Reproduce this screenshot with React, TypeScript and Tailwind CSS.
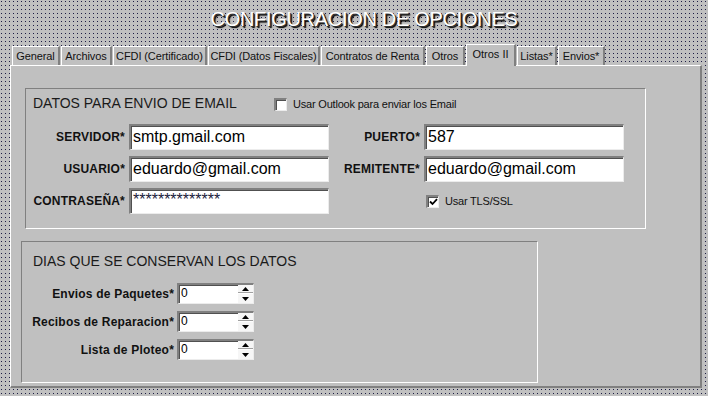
import React from 'react';

const TABS = [
  { label: 'General', w: 'w-[48px]' },
  { label: 'Archivos', w: 'w-[51px]' },
  { label: 'CFDI (Certificado)', w: 'w-[94px]' },
  { label: 'CFDI (Datos Fiscales)', w: 'w-[112px]' },
  { label: 'Contratos de Renta', w: 'w-[104px]' },
  { label: 'Otros', w: 'w-[39px]' },
  { label: 'Otros II', w: 'w-[50px]', active: true },
  { label: 'Listas*', w: 'w-[40px]' },
  { label: 'Envios*', w: 'w-[47px]' },
];

// sunken 3d edge used by text boxes, spinners and checkboxes
const sunken =
  'border-t-2 border-l-2 border-b border-r border-t-[#808080] border-l-[#808080] border-b-[#ececec] border-r-[#ececec] shadow-[inset_1px_1px_0_#505050]';

function TextBox({ value, masked }: { value: string; masked?: boolean }) {
  return (
    <div className={`h-[26px] w-[200px] bg-white pl-[2px] ${sunken}`}>
      {masked ? (
        <span className="block text-[16px] leading-[20px] text-[#1a1a3a]">{value}</span>
      ) : (
        <span className="block text-[16px] leading-[22px] text-black">{value}</span>
      )}
    </div>
  );
}

function CheckBox({ checked, label }: { checked?: boolean; label: string }) {
  return (
    <div className="flex items-center gap-[6px]">
      <span className={`flex h-[13px] w-[13px] items-center justify-center bg-white ${sunken}`}>
        {checked && (
          <svg width="9" height="8" viewBox="0 0 9 8">
            <path d="M1 3.5 L3.5 6 L8 1.2" fill="none" stroke="#000" strokeWidth="1.8" />
          </svg>
        )}
      </span>
      <span className="text-[11px] leading-[13px] tracking-[-0.2px] text-[#111]">{label}</span>
    </div>
  );
}

function Spinner() {
  return (
    <div className={`flex h-[21px] w-[77px] bg-white ${sunken}`}>
      <span className="flex-1 pl-[2px] text-[12px] leading-[17px] text-black">0</span>
      <div className="flex w-[15px] flex-col">
        <div className="flex h-[8px] items-center justify-center border-b border-[#a0a0a0] bg-[#f6f6f6]">
          <svg width="7" height="4" viewBox="0 0 7 4">
            <path d="M0 4 L3.5 0 L7 4 Z" fill="#000" />
          </svg>
        </div>
        <div className="flex flex-1 items-center justify-center border-t border-t-white bg-[#f6f6f6]">
          <svg width="7" height="4" viewBox="0 0 7 4">
            <path d="M0 0 L7 0 L3.5 4 Z" fill="#000" />
          </svg>
        </div>
      </div>
    </div>
  );
}

function Label({ children, w }: { children: React.ReactNode; w: string }) {
  return <span className={`${w} text-right text-[12px] font-bold tracking-[0.2px] text-[#111]`}>{children}</span>;
}

export default function App() {
  return (
    <div className="h-[396px] w-[708px] overflow-hidden bg-[#c0c0c0] bg-[image:conic-gradient(at_1px_1px,transparent_270deg,#1c1c44_270deg)] bg-[size:4px_4px] bg-[position:1px_1px] font-['Liberation_Sans',Arial,sans-serif]">
      {/* Title */}
      <div className="flex h-[44px] justify-center pl-[20px] pt-[7px]">
        <h1 className="text-[20px] leading-[24px] tracking-[-0.3px] text-white [text-shadow:1px_1px_0_#303030,2px_2px_1px_#000]">
          CONFIGURACION DE OPCIONES
        </h1>
      </div>

      {/* Tabs */}
      <div className="flex h-[21px] items-end gap-[1px] pl-[12px]">
        {TABS.map((t) =>
          t.active ? (
            <div
              key={t.label}
              className={`${t.w} relative z-10 -mb-[1px] flex h-[22px] justify-center border-l border-t border-r-2 border-l-white border-t-white border-r-[#808080] bg-[#c0c0c0] pt-[2px] text-[11px] leading-[14px] text-[#111]`}
            >
              {t.label}
            </div>
          ) : (
            <div
              key={t.label}
              className={`${t.w} flex h-[19px] items-center justify-center border-l border-t border-r-2 border-l-white border-t-white border-r-[#808080] bg-[#c0c0c0] text-[11px] tracking-[-0.1px] text-[#111]`}
            >
              {t.label}
            </div>
          )
        )}
      </div>

      {/* Page */}
      <div className="ml-[10px] h-[323px] w-[692px] border-l border-t border-b-2 border-r-2 border-l-white border-t-white border-b-[#808080] border-r-[#808080] bg-[#c0c0c0]">
        {/* Email group */}
        <div className="ml-[14px] mt-[22px] h-[141px] w-[621px] border border-l-[#808080] border-t-[#808080] border-b-white border-r-white">
          <div className="flex h-[28px] items-center pl-[7px]">
            <span className="w-[241px] text-[14px] text-[#1a1a1a]">DATOS PARA ENVIO DE EMAIL</span>
            <div className="mt-[3px]">
              <CheckBox label="Usar Outlook para enviar los Email" />
            </div>
          </div>
          <div className="mt-[7px] grid grid-cols-[99px_200px_87px_200px] items-center gap-x-[4px] gap-y-[6px]">
            <Label w="">SERVIDOR*</Label>
            <TextBox value="smtp.gmail.com" />
            <Label w="">PUERTO*</Label>
            <TextBox value="587" />

            <Label w="">USUARIO*</Label>
            <TextBox value="eduardo@gmail.com" />
            <Label w="">REMITENTE*</Label>
            <TextBox value="eduardo@gmail.com" />

            <Label w="">CONTRASEÑA*</Label>
            <TextBox value="**************" masked />
            <span />
            <div className="ml-[2px]">
              <CheckBox checked label="Usar TLS/SSL" />
            </div>
          </div>
        </div>

        {/* Retention group */}
        <div className="ml-[10px] mt-[12px] h-[142px] w-[517px] border border-l-[#808080] border-t-[#808080] border-b-white border-r-white">
          <div className="flex h-[38px] items-center pl-[11px]">
            <span className="text-[14px] text-[#1a1a1a]">DIAS QUE SE CONSERVAN LOS DATOS</span>
          </div>
          <div className="mt-[3px] flex flex-col gap-[7px]">
            {['Envios de Paquetes*', 'Recibos de Reparacion*', 'Lista de Ploteo*'].map((l) => (
              <div key={l} className="flex items-center gap-[3px]">
                <Label w="w-[152px]">{l}</Label>
                <Spinner />
              </div>
            ))}
          </div>
        </div>
      </div>
    </div>
  );
}
